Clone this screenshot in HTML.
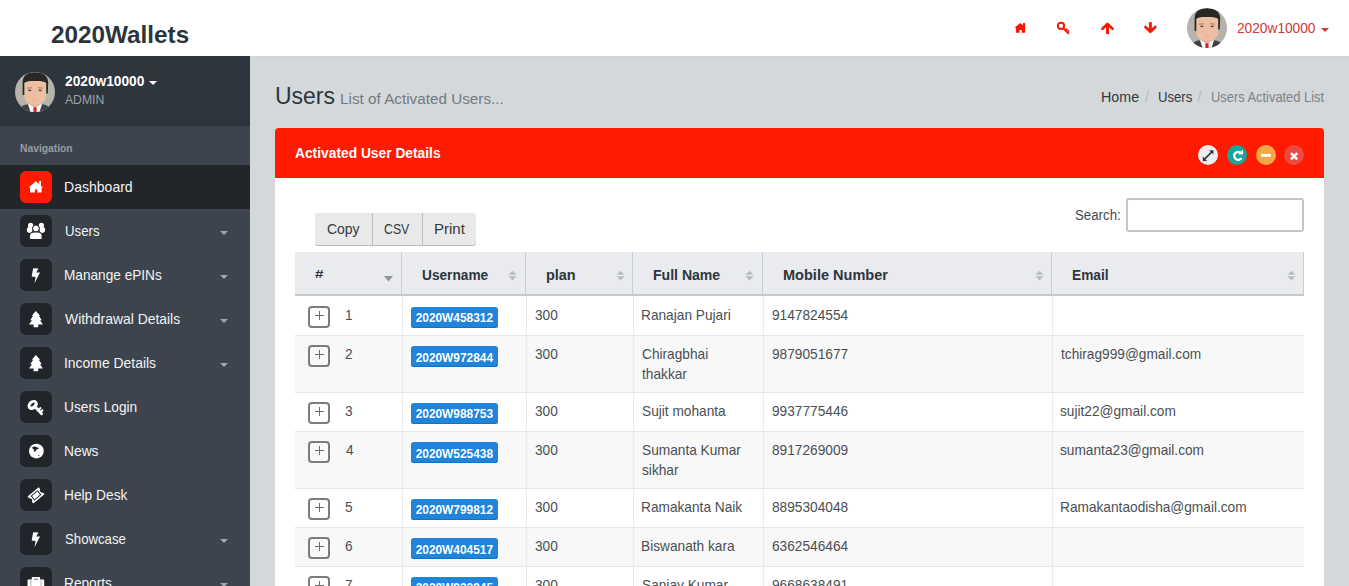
<!DOCTYPE html><html><head><meta charset="utf-8"><style>
html,body{margin:0;padding:0;width:1349px;height:586px;overflow:hidden;background:#d4d8db;font-family:"Liberation Sans", sans-serif;}
.t{position:absolute;white-space:nowrap;}
.b{position:absolute;}
</style></head><body>
<div class="b" style="left:0px;top:0px;width:1349px;height:56px;background:#fff;"></div>
<div class="b" style="left:250px;top:56px;width:1099px;height:1px;background:#cfd3d6;"></div>
<div class="t" style="left:51.15px;top:23.00px;font-size:24px;line-height:24px;color:#2d353c;font-weight:bold;transform:scaleX(1.0123);transform-origin:0 0;">2020Wallets</div>
<svg class="b" style="left:1000px;top:0px" width="170" height="56" viewBox="1000 0 170 56">
<path d="M1014.4 27.8 L1020.2 22.9 L1023 25.3 L1023 23 L1025 23 L1025 27 L1026.4 27.8 L1025.1 27.8 L1025.1 32.8 L1021.7 32.8 L1021.7 30 L1019.6 30 L1019.6 32.8 L1016 32.8 L1016 27.8Z" fill="#f41a08"/>
<g fill="none" stroke="#f41a08"><circle cx="1061" cy="25.9" r="3.1" stroke-width="1.9"/><path d="M1063.2 28.1 L1068.9 33.8" stroke-width="2"/><path d="M1065.6 30.5 L1067.5 28.6 M1067.3 32.2 L1069.2 30.3" stroke-width="1.6"/></g>
<path d="M1107.5 25.5 L1107.5 34" stroke="#f41a08" stroke-width="2.9" fill="none"/><path d="M1102.5 28.8 L1107.5 23.9 L1112.5 28.8" stroke="#f41a08" stroke-width="2.7" fill="none" stroke-linecap="round" stroke-linejoin="round"/>
<path d="M1150.4 22.2 L1150.4 30.5" stroke="#f41a08" stroke-width="2.9" fill="none"/><path d="M1145.5 27 L1150.4 31.8 L1155.3 27" stroke="#f41a08" stroke-width="2.7" fill="none" stroke-linecap="round" stroke-linejoin="round"/>
</svg>
<div class="b" style="left:1187px;top:8px;width:40px;height:40px;"><svg width="40" height="40" viewBox="0 0 40 40"><defs><clipPath id="ch"><circle cx="20" cy="20" r="20"/></clipPath></defs>
<g clip-path="url(#ch)">
<rect width="40" height="40" fill="#b6b2ac"/>
<path d="M12.5 32.3 L27.5 32.3 L28.5 40 L11.5 40Z" fill="#f6f6f6"/>
<path d="M2 40 L5.5 35.5 C8 33.3 11 32.3 13 32.3 L15.5 40Z M38 40 L34.5 35.5 C32 33.3 29 32.3 27 32.3 L24.5 40Z" fill="#3b4145"/>
<path d="M14.5 26 L25.5 26 L25.5 32.5 L20 36 L14.5 32.5Z" fill="#e5b296"/>
<rect x="18.4" y="35.3" width="3.2" height="4.7" fill="#cc2533"/>
<path d="M9.3 9 L31.2 9 L31.2 24 C31.2 30 26 33 20 33 C14 33 9.3 30 9.3 24Z" fill="#ecbea2"/>
<path d="M7.6 23 L7.6 10 C8 3 13 0.3 20 0.3 C27 0.3 32.8 3 33.2 10 L32.8 21.5 L31.2 21.5 L31.2 11 C29 9.2 25 8.8 20 9 C15 8.8 11 9.2 9.3 11 L9.3 23Z" fill="#2a2827"/>
<path d="M12 15.8 L17 15.3 L17 16.3 L12 16.6Z M23 15.3 L28 15.8 L28 16.6 L23 16.3Z" fill="#a57257"/>
<ellipse cx="14.8" cy="18.3" rx="1.7" ry="0.9" fill="#6b4434"/>
<ellipse cx="25.2" cy="18.3" rx="1.7" ry="0.9" fill="#6b4434"/>
<ellipse cx="20" cy="28" rx="3" ry="1.5" fill="#eab09a" opacity="0.6"/>
</g></svg></div>
<div class="t" style="left:1236.71px;top:22.00px;font-size:13.8px;line-height:13.8px;color:#d03838;transform:scaleX(0.9932);transform-origin:0 0;">2020w10000</div>
<div class="b" style="left:1321px;top:28px;width:0;height:0;border-left:4.0px solid transparent;border-right:4.0px solid transparent;border-top:4.0px solid #d03838;"></div>
<div class="b" style="left:0px;top:56px;width:250px;height:530px;background:#3e444d;"></div>
<div class="b" style="left:0px;top:56px;width:250px;height:70px;background:#2f353d;"></div>
<div class="b" style="left:0px;top:122px;width:250px;height:1px;background:#2b3138;"></div>
<div class="b" style="left:0px;top:125px;width:250px;height:1px;background:#2b3138;"></div>
<div class="b" style="left:15px;top:71.5px;width:40px;height:40px;"><svg width="40" height="40" viewBox="0 0 40 40"><defs><clipPath id="cs"><circle cx="20" cy="20" r="20"/></clipPath></defs>
<g clip-path="url(#cs)">
<rect width="40" height="40" fill="#b6b2ac"/>
<path d="M12.5 32.3 L27.5 32.3 L28.5 40 L11.5 40Z" fill="#f6f6f6"/>
<path d="M2 40 L5.5 35.5 C8 33.3 11 32.3 13 32.3 L15.5 40Z M38 40 L34.5 35.5 C32 33.3 29 32.3 27 32.3 L24.5 40Z" fill="#3b4145"/>
<path d="M14.5 26 L25.5 26 L25.5 32.5 L20 36 L14.5 32.5Z" fill="#e5b296"/>
<rect x="18.4" y="35.3" width="3.2" height="4.7" fill="#cc2533"/>
<path d="M9.3 9 L31.2 9 L31.2 24 C31.2 30 26 33 20 33 C14 33 9.3 30 9.3 24Z" fill="#ecbea2"/>
<path d="M7.6 23 L7.6 10 C8 3 13 0.3 20 0.3 C27 0.3 32.8 3 33.2 10 L32.8 21.5 L31.2 21.5 L31.2 11 C29 9.2 25 8.8 20 9 C15 8.8 11 9.2 9.3 11 L9.3 23Z" fill="#2a2827"/>
<path d="M12 15.8 L17 15.3 L17 16.3 L12 16.6Z M23 15.3 L28 15.8 L28 16.6 L23 16.3Z" fill="#a57257"/>
<ellipse cx="14.8" cy="18.3" rx="1.7" ry="0.9" fill="#6b4434"/>
<ellipse cx="25.2" cy="18.3" rx="1.7" ry="0.9" fill="#6b4434"/>
<ellipse cx="20" cy="28" rx="3" ry="1.5" fill="#eab09a" opacity="0.6"/>
</g></svg></div>
<div class="t" style="left:64.62px;top:75.00px;font-size:13.8px;line-height:13.8px;color:#fff;font-weight:bold;transform:scaleX(0.9946);transform-origin:0 0;">2020w10000</div>
<div class="b" style="left:149px;top:81px;width:0;height:0;border-left:4.5px solid transparent;border-right:4.5px solid transparent;border-top:4.5px solid #fff;"></div>
<div class="t" style="left:65.00px;top:94.00px;font-size:12.5px;line-height:12.5px;color:#9ea3a9;transform:scaleX(0.9732);transform-origin:0 0;">ADMIN</div>
<div class="t" style="left:19.73px;top:144.00px;font-size:10px;line-height:10px;color:#989da3;font-weight:bold;transform:scaleX(1.0291);transform-origin:0 0;">Navigation</div>
<div class="b" style="left:0px;top:165px;width:250px;height:44px;background:#22262b;"></div>
<div class="b" style="left:20px;top:171px;width:32px;height:32px;background:#ff1b00;border-radius:6px;"></div>
<svg class="b" style="left:20px;top:171px" width="32" height="32" viewBox="0 0 32 32" fill="#fff"><path d="M8.7 16.6 L15.8 10.2 L18.8 12.9 L18.8 10.1 L21 10.1 L21 14.9 L23.2 16.6 L21.6 16.6 L21.6 21.6 L17.3 21.6 L17.3 18.6 L14.9 18.6 L14.9 21.6 L10.1 21.6 L10.1 16.6Z"/></svg>
<div class="t" style="left:64.38px;top:180.00px;font-size:14.5px;line-height:14.5px;color:#f2f3f4;transform:scaleX(0.9680);transform-origin:0 0;">Dashboard</div>
<div class="b" style="left:20px;top:215px;width:32px;height:32px;background:#212429;border-radius:6px;"></div>
<svg class="b" style="left:20px;top:215px" width="32" height="32" viewBox="0 0 32 32" fill="#fff"><circle cx="10.6" cy="10.4" r="2.6"/><circle cx="21.4" cy="10.4" r="2.6"/><circle cx="9.6" cy="14.9" r="2.8"/><circle cx="22.3" cy="14.9" r="2.8"/><path d="M9.6 24.5 L9.6 21 C9.6 18 12 17 15.9 17 C19.8 17 22.1 18 22.1 21 L22.1 24.5Z" stroke="#212429" stroke-width="1"/><circle cx="15.9" cy="13.4" r="3.4" stroke="#212429" stroke-width="1"/></svg>
<div class="t" style="left:64.51px;top:224.00px;font-size:14.5px;line-height:14.5px;color:#f2f3f4;transform:scaleX(0.9131);transform-origin:0 0;">Users</div>
<div class="b" style="left:220px;top:231px;width:0;height:0;border-left:4.25px solid transparent;border-right:4.25px solid transparent;border-top:4.25px solid #a3a8ae;"></div>
<div class="b" style="left:20px;top:259px;width:32px;height:32px;background:#212429;border-radius:6px;"></div>
<svg class="b" style="left:20px;top:259px" width="32" height="32" viewBox="0 0 32 32" fill="#fff"><path d="M13.1 9.2 L18.4 9.6 L16.3 13.6 L20 13.4 L14.5 24.3 L15.6 18 L11.7 17.6Z"/></svg>
<div class="t" style="left:64.41px;top:268.00px;font-size:14.5px;line-height:14.5px;color:#f2f3f4;transform:scaleX(0.9404);transform-origin:0 0;">Manange ePINs</div>
<div class="b" style="left:220px;top:275px;width:0;height:0;border-left:4.25px solid transparent;border-right:4.25px solid transparent;border-top:4.25px solid #a3a8ae;"></div>
<div class="b" style="left:20px;top:303px;width:32px;height:32px;background:#212429;border-radius:6px;"></div>
<svg class="b" style="left:20px;top:303px" width="32" height="32" viewBox="0 0 32 32" fill="#fff"><path d="M15.8 7.9 L20.2 12.8 L18.8 12.8 L21.8 17.3 L20 17.3 L22.9 21.6 L18.2 21.6 L18.2 24.3 L13.6 24.3 L13.6 21.6 L9 21.6 L12 17.3 L10.2 17.3 L13.2 12.8 L11.8 12.8Z"/></svg>
<div class="t" style="left:65.43px;top:312.00px;font-size:14.5px;line-height:14.5px;color:#f2f3f4;transform:scaleX(0.9592);transform-origin:0 0;">Withdrawal Details</div>
<div class="b" style="left:220px;top:319px;width:0;height:0;border-left:4.25px solid transparent;border-right:4.25px solid transparent;border-top:4.25px solid #a3a8ae;"></div>
<div class="b" style="left:20px;top:347px;width:32px;height:32px;background:#212429;border-radius:6px;"></div>
<svg class="b" style="left:20px;top:347px" width="32" height="32" viewBox="0 0 32 32" fill="#fff"><path d="M15.8 7.9 L20.2 12.8 L18.8 12.8 L21.8 17.3 L20 17.3 L22.9 21.6 L18.2 21.6 L18.2 24.3 L13.6 24.3 L13.6 21.6 L9 21.6 L12 17.3 L10.2 17.3 L13.2 12.8 L11.8 12.8Z"/></svg>
<div class="t" style="left:64.25px;top:356.00px;font-size:14.5px;line-height:14.5px;color:#f2f3f4;transform:scaleX(0.9596);transform-origin:0 0;">Income Details</div>
<div class="b" style="left:220px;top:363px;width:0;height:0;border-left:4.25px solid transparent;border-right:4.25px solid transparent;border-top:4.25px solid #a3a8ae;"></div>
<div class="b" style="left:20px;top:391px;width:32px;height:32px;background:#212429;border-radius:6px;"></div>
<svg class="b" style="left:20px;top:391px" width="32" height="32" viewBox="0 0 32 32" fill="#fff"><ellipse cx="12.7" cy="13.9" rx="5.6" ry="4.5" transform="rotate(-42 12.7 13.9)"/><path d="M15.5 16.2 L21.6 22.8" stroke="#fff" stroke-width="2.8" stroke-linecap="round"/><path d="M18.6 18.8 L21 16.6 M20.6 21 L23 18.8" stroke="#fff" stroke-width="2"/><ellipse cx="12.6" cy="13.6" rx="2.6" ry="1.1" fill="#212429" transform="rotate(-42 12.6 13.6)"/></svg>
<div class="t" style="left:64.47px;top:400.00px;font-size:14.5px;line-height:14.5px;color:#f2f3f4;transform:scaleX(0.9465);transform-origin:0 0;">Users Login</div>
<div class="b" style="left:20px;top:435px;width:32px;height:32px;background:#212429;border-radius:6px;"></div>
<svg class="b" style="left:20px;top:435px" width="32" height="32" viewBox="0 0 32 32" fill="#fff"><circle cx="16.4" cy="16.1" r="7.4"/><path d="M12.3 12.2 C13.5 11.2 15.5 11.3 16.8 12.2 C17.6 12.8 18.6 12.6 19.4 13 C18.5 14 17.2 14 16.5 14.8 C15.8 15.6 15.5 16.5 14.6 16.9 C13.8 16 14.2 14.6 13.2 14 C12.6 13.6 12.2 13 12.3 12.2Z M18 20.5 C18.5 19.9 19.3 19.9 19.6 20.4 C19.2 21 18.5 21 18 20.5Z" fill="#212429"/></svg>
<div class="t" style="left:64.40px;top:444.00px;font-size:14.5px;line-height:14.5px;color:#f2f3f4;transform:scaleX(0.9513);transform-origin:0 0;">News</div>
<div class="b" style="left:20px;top:479px;width:32px;height:32px;background:#212429;border-radius:6px;"></div>
<svg class="b" style="left:20px;top:479px" width="32" height="32" viewBox="0 0 32 32" fill="#fff"><g transform="rotate(-40 16 16.4)"><path d="M8.8 11.9 L23.2 11.9 L23.2 14.2 C22.3 14.4 21.7 15.3 21.7 16.4 C21.7 17.5 22.3 18.4 23.2 18.6 L23.2 20.9 L8.8 20.9 L8.8 18.6 C9.7 18.4 10.3 17.5 10.3 16.4 C10.3 15.3 9.7 14.4 8.8 14.2Z"/><rect x="12" y="13.9" width="8" height="5" fill="none" stroke="#212429" stroke-width="1"/></g></svg>
<div class="t" style="left:64.40px;top:488.00px;font-size:14.5px;line-height:14.5px;color:#f2f3f4;transform:scaleX(0.9474);transform-origin:0 0;">Help Desk</div>
<div class="b" style="left:20px;top:523px;width:32px;height:32px;background:#212429;border-radius:6px;"></div>
<svg class="b" style="left:20px;top:523px" width="32" height="32" viewBox="0 0 32 32" fill="#fff"><path d="M13.1 9.2 L18.4 9.6 L16.3 13.6 L20 13.4 L14.5 24.3 L15.6 18 L11.7 17.6Z"/></svg>
<div class="t" style="left:64.91px;top:532.00px;font-size:14.5px;line-height:14.5px;color:#f2f3f4;transform:scaleX(0.9099);transform-origin:0 0;">Showcase</div>
<div class="b" style="left:220px;top:539px;width:0;height:0;border-left:4.25px solid transparent;border-right:4.25px solid transparent;border-top:4.25px solid #a3a8ae;"></div>
<div class="b" style="left:20px;top:567px;width:32px;height:32px;background:#212429;border-radius:6px;"></div>
<svg class="b" style="left:20px;top:567px" width="32" height="32" viewBox="0 0 32 32" fill="#fff"><path d="M11.8 12.6 L11.8 10.6 C11.8 10 12.2 9.9 12.8 9.9 L19.1 9.9 C19.7 9.9 20.1 10 20.1 10.6 L20.1 12.6 L23.2 12.6 C23.8 12.6 24.2 13 24.2 13.6 L24.2 26 L7.5 26 L7.5 13.6 C7.5 13 7.9 12.6 8.5 12.6Z M14 11.8 L14 12.6 L17.9 12.6 L17.9 11.8Z" fill-rule="evenodd"/><path d="M10.9 12.6 L10.9 26 M21.1 12.6 L21.1 26" stroke="#bfc1c3" stroke-width="1.2"/></svg>
<div class="t" style="left:64.41px;top:576.00px;font-size:14.5px;line-height:14.5px;color:#f2f3f4;transform:scaleX(0.9433);transform-origin:0 0;">Reports</div>
<div class="b" style="left:220px;top:583px;width:0;height:0;border-left:4.25px solid transparent;border-right:4.25px solid transparent;border-top:4.25px solid #a3a8ae;"></div>
<div class="t" style="left:274.78px;top:84.00px;font-size:24px;line-height:24px;color:#2d353c;transform:scaleX(0.9567);transform-origin:0 0;">Users</div>
<div class="t" style="left:340.08px;top:91.00px;font-size:15.2px;line-height:15.2px;color:#737a80;transform:scaleX(1.0054);transform-origin:0 0;">List of Activated Users...</div>
<div class="t" style="left:1101.16px;top:90.00px;font-size:14px;line-height:14px;color:#34393f;transform:scaleX(1.0208);transform-origin:0 0;">Home</div>
<div class="t" style="left:1145.00px;top:90.00px;font-size:14px;line-height:14px;color:#b3b8bd;">/</div>
<div class="t" style="left:1158.22px;top:90.00px;font-size:14px;line-height:14px;color:#34393f;transform:scaleX(0.9371);transform-origin:0 0;">Users</div>
<div class="t" style="left:1197.50px;top:90.00px;font-size:14px;line-height:14px;color:#b3b8bd;">/</div>
<div class="t" style="left:1211.03px;top:90.00px;font-size:14px;line-height:14px;color:#7c8288;transform:scaleX(0.9195);transform-origin:0 0;">Users Activated List</div>
<div class="b" style="left:275px;top:128px;width:1049px;height:458px;background:#fff;border-radius:4px 4px 0 0;"></div>
<div class="b" style="left:275px;top:128px;width:1049px;height:50px;background:#ff1a00;border-radius:4px 4px 0 0;"></div>
<div class="t" style="left:294.66px;top:146.00px;font-size:14px;line-height:14px;color:#fff;font-weight:bold;transform:scaleX(0.9848);transform-origin:0 0;">Activated User Details</div>
<div class="b" style="left:1198px;top:145px;width:20px;height:20px;border-radius:50%;background:#eceef0;"></div>
<div class="b" style="left:1227.1px;top:145px;width:20px;height:20px;border-radius:50%;background:#18a59b;"></div>
<div class="b" style="left:1255.8px;top:145px;width:20px;height:20px;border-radius:50%;background:#f3a845;"></div>
<div class="b" style="left:1284.4px;top:145px;width:20px;height:20px;border-radius:50%;background:#ea4a42;"></div>
<svg class="b" style="left:1190px;top:140px" width="120" height="30" viewBox="1190 140 120 30">
<path d="M1204.6 159.1 L1211.6 152.1" stroke="#2d353c" stroke-width="1.5"/><path d="M1213.4 150.3 L1213.4 154.6 L1209.1 150.3Z M1202.8 160.9 L1202.8 156.6 L1207.1 160.9Z" fill="#2d353c"/>
<path d="M1241.2 153.2 A4 4 0 1 0 1241.6 158" fill="none" stroke="#fff" stroke-width="2.3"/><path d="M1238.2 154.4 L1243 154.4 L1243 149.6Z" fill="#fff"/>
<rect x="1261" y="153.9" width="9.8" height="2.9" fill="#fff"/>
<path d="M1291 153.1 L1297.2 159.3 M1297.2 153.1 L1291 159.3" stroke="#fff" stroke-width="2.6"/>
</svg>
<div class="b" style="left:315px;top:213px;width:161px;height:32px;background:#e9e9e9;border-radius:3px;box-shadow:0 1px 0 #b9bcbf;"></div>
<div class="b" style="left:372px;top:213px;width:1px;height:32px;background:#bcbfc2;"></div>
<div class="b" style="left:422px;top:213px;width:1px;height:32px;background:#bcbfc2;"></div>
<div class="t" style="left:326.90px;top:222.00px;font-size:14.5px;line-height:14.5px;color:#33383d;transform:scaleX(0.9628);transform-origin:0 0;">Copy</div>
<div class="t" style="left:384.28px;top:222.00px;font-size:14.5px;line-height:14.5px;color:#33383d;transform:scaleX(0.8483);transform-origin:0 0;">CSV</div>
<div class="t" style="left:434.30px;top:222.00px;font-size:14.5px;line-height:14.5px;color:#33383d;transform:scaleX(1.0362);transform-origin:0 0;">Print</div>
<div class="t" style="left:1074.70px;top:208.00px;font-size:14px;line-height:14px;color:#44494e;transform:scaleX(0.9473);transform-origin:0 0;">Search:</div>
<div class="b" style="left:1126px;top:198px;width:174px;height:30px;border:2px solid #c4c5c6;border-radius:3px;background:#fff;"></div>
<div class="b" style="left:295px;top:252px;width:1009px;height:42px;background:#e9ebee;"></div>
<div class="b" style="left:295px;top:294px;width:1009px;height:2px;background:#c6c9cc;"></div>
<div class="b" style="left:401px;top:252px;width:1px;height:42px;background:#c9ccd0;"></div>
<div class="b" style="left:525px;top:252px;width:1px;height:42px;background:#c9ccd0;"></div>
<div class="b" style="left:632px;top:252px;width:1px;height:42px;background:#c9ccd0;"></div>
<div class="b" style="left:762px;top:252px;width:1px;height:42px;background:#c9ccd0;"></div>
<div class="b" style="left:1051px;top:252px;width:1px;height:42px;background:#c9ccd0;"></div>
<div class="b" style="left:1303px;top:252px;width:1px;height:42px;background:#c9ccd0;"></div>
<div class="t" style="left:314.77px;top:269.00px;font-size:11.5px;line-height:11.5px;color:#2d353c;font-weight:bold;transform:scaleX(1.3251);transform-origin:0 0;">#</div>
<div class="t" style="left:421.68px;top:268.00px;font-size:14px;line-height:14px;color:#2d353c;font-weight:bold;transform:scaleX(0.9780);transform-origin:0 0;">Username</div>
<div class="t" style="left:545.66px;top:268.00px;font-size:14px;line-height:14px;color:#2d353c;font-weight:bold;transform:scaleX(1.0289);transform-origin:0 0;">plan</div>
<div class="t" style="left:652.59px;top:268.00px;font-size:14px;line-height:14px;color:#2d353c;font-weight:bold;transform:scaleX(1.0043);transform-origin:0 0;">Full Name</div>
<div class="t" style="left:782.66px;top:268.00px;font-size:14px;line-height:14px;color:#2d353c;font-weight:bold;transform:scaleX(1.0377);transform-origin:0 0;">Mobile Number</div>
<div class="t" style="left:1071.91px;top:268.00px;font-size:14px;line-height:14px;color:#2d353c;font-weight:bold;transform:scaleX(0.9777);transform-origin:0 0;">Email</div>
<svg class="b" style="left:384px;top:276px" width="9" height="6" viewBox="0 0 9 6"><path d="M0 0 L9 0 L4.5 5.5Z" fill="#8f9499"/></svg>
<svg class="b" style="left:508px;top:270px" width="9" height="11" viewBox="0 0 9 11"><path d="M4.5 0.7 L8.5 4.7 L0.5 4.7Z M4.5 10.5 L8.5 6.3 L0.5 6.3Z" fill="#b8bbbe"/></svg>
<svg class="b" style="left:616px;top:270px" width="9" height="11" viewBox="0 0 9 11"><path d="M4.5 0.7 L8.5 4.7 L0.5 4.7Z M4.5 10.5 L8.5 6.3 L0.5 6.3Z" fill="#b8bbbe"/></svg>
<svg class="b" style="left:745px;top:270px" width="9" height="11" viewBox="0 0 9 11"><path d="M4.5 0.7 L8.5 4.7 L0.5 4.7Z M4.5 10.5 L8.5 6.3 L0.5 6.3Z" fill="#b8bbbe"/></svg>
<svg class="b" style="left:1035px;top:270px" width="9" height="11" viewBox="0 0 9 11"><path d="M4.5 0.7 L8.5 4.7 L0.5 4.7Z M4.5 10.5 L8.5 6.3 L0.5 6.3Z" fill="#b8bbbe"/></svg>
<svg class="b" style="left:1287px;top:270px" width="9" height="11" viewBox="0 0 9 11"><path d="M4.5 0.7 L8.5 4.7 L0.5 4.7Z M4.5 10.5 L8.5 6.3 L0.5 6.3Z" fill="#b8bbbe"/></svg>
<div class="b" style="left:402px;top:296px;width:1px;height:39px;background:#e8eaec;"></div>
<div class="b" style="left:526px;top:296px;width:1px;height:39px;background:#e8eaec;"></div>
<div class="b" style="left:633px;top:296px;width:1px;height:39px;background:#e8eaec;"></div>
<div class="b" style="left:763px;top:296px;width:1px;height:39px;background:#e8eaec;"></div>
<div class="b" style="left:1052px;top:296px;width:1px;height:39px;background:#e8eaec;"></div>
<div class="b" style="left:308px;top:306px;width:18px;height:18px;border:2px solid #7c7c7c;border-radius:4px;"></div>
<div class="b" style="left:315px;top:315px;width:9px;height:1px;background:#6e6e6e;"></div>
<div class="b" style="left:319px;top:311px;width:1px;height:9px;background:#6e6e6e;"></div>
<div class="t" style="left:344.97px;top:308.00px;font-size:14.4px;line-height:14.4px;color:#4a4f54;transform:scaleX(0.9514);transform-origin:0 0;">1</div>
<div class="b" style="left:411px;top:307px;width:87px;height:21px;background:#1e84dc;border-radius:3px;box-shadow:inset 0 -1px 0 #1870c0;"></div>
<div class="t" style="left:415.68px;top:313.00px;font-size:11.9px;line-height:11.9px;color:#fff;font-weight:bold;">2020W458312</div>
<div class="t" style="left:534.95px;top:308.00px;font-size:14.4px;line-height:14.4px;color:#4a4f54;transform:scaleX(0.9514);transform-origin:0 0;">300</div>
<div class="t" style="left:641.10px;top:308.00px;font-size:14.4px;line-height:14.4px;color:#4a4f54;transform:scaleX(0.9514);transform-origin:0 0;">Ranajan Pujari</div>
<div class="t" style="left:771.58px;top:308.00px;font-size:14.4px;line-height:14.4px;color:#4a4f54;transform:scaleX(0.9514);transform-origin:0 0;">9147824554</div>
<div class="b" style="left:295px;top:335px;width:1009px;height:1px;background:#e4e6e8;"></div>
<div class="b" style="left:295px;top:336px;width:1009px;height:56px;background:#f8f8f8;"></div>
<div class="b" style="left:402px;top:336px;width:1px;height:56px;background:#e8eaec;"></div>
<div class="b" style="left:526px;top:336px;width:1px;height:56px;background:#e8eaec;"></div>
<div class="b" style="left:633px;top:336px;width:1px;height:56px;background:#e8eaec;"></div>
<div class="b" style="left:763px;top:336px;width:1px;height:56px;background:#e8eaec;"></div>
<div class="b" style="left:1052px;top:336px;width:1px;height:56px;background:#e8eaec;"></div>
<div class="b" style="left:308px;top:345px;width:18px;height:18px;border:2px solid #7c7c7c;border-radius:4px;"></div>
<div class="b" style="left:315px;top:354px;width:9px;height:1px;background:#6e6e6e;"></div>
<div class="b" style="left:319px;top:350px;width:1px;height:9px;background:#6e6e6e;"></div>
<div class="t" style="left:345.31px;top:347.00px;font-size:14.4px;line-height:14.4px;color:#4a4f54;transform:scaleX(0.9514);transform-origin:0 0;">2</div>
<div class="b" style="left:411px;top:346px;width:87px;height:21px;background:#1e84dc;border-radius:3px;box-shadow:inset 0 -1px 0 #1870c0;"></div>
<div class="t" style="left:415.68px;top:353.00px;font-size:11.9px;line-height:11.9px;color:#fff;font-weight:bold;">2020W972844</div>
<div class="t" style="left:534.95px;top:347.00px;font-size:14.4px;line-height:14.4px;color:#4a4f54;transform:scaleX(0.9514);transform-origin:0 0;">300</div>
<div class="t" style="left:641.52px;top:347.00px;font-size:14.4px;line-height:14.4px;color:#4a4f54;transform:scaleX(0.9514);transform-origin:0 0;">Chiragbhai</div>
<div class="t" style="left:641.99px;top:367.00px;font-size:14.4px;line-height:14.4px;color:#4a4f54;transform:scaleX(0.9514);transform-origin:0 0;">thakkar</div>
<div class="t" style="left:771.58px;top:347.00px;font-size:14.4px;line-height:14.4px;color:#4a4f54;transform:scaleX(0.9514);transform-origin:0 0;">9879051677</div>
<div class="t" style="left:1060.69px;top:347.00px;font-size:14.4px;line-height:14.4px;color:#4a4f54;transform:scaleX(0.9514);transform-origin:0 0;">tchirag999@gmail.com</div>
<div class="b" style="left:295px;top:392px;width:1009px;height:1px;background:#e4e6e8;"></div>
<div class="b" style="left:402px;top:393px;width:1px;height:38px;background:#e8eaec;"></div>
<div class="b" style="left:526px;top:393px;width:1px;height:38px;background:#e8eaec;"></div>
<div class="b" style="left:633px;top:393px;width:1px;height:38px;background:#e8eaec;"></div>
<div class="b" style="left:763px;top:393px;width:1px;height:38px;background:#e8eaec;"></div>
<div class="b" style="left:1052px;top:393px;width:1px;height:38px;background:#e8eaec;"></div>
<div class="b" style="left:308px;top:402px;width:18px;height:18px;border:2px solid #7c7c7c;border-radius:4px;"></div>
<div class="b" style="left:315px;top:411px;width:9px;height:1px;background:#6e6e6e;"></div>
<div class="b" style="left:319px;top:407px;width:1px;height:9px;background:#6e6e6e;"></div>
<div class="t" style="left:345.45px;top:404.00px;font-size:14.4px;line-height:14.4px;color:#4a4f54;transform:scaleX(0.9514);transform-origin:0 0;">3</div>
<div class="b" style="left:411px;top:403px;width:87px;height:21px;background:#1e84dc;border-radius:3px;box-shadow:inset 0 -1px 0 #1870c0;"></div>
<div class="t" style="left:415.68px;top:409.00px;font-size:11.9px;line-height:11.9px;color:#fff;font-weight:bold;">2020W988753</div>
<div class="t" style="left:534.95px;top:404.00px;font-size:14.4px;line-height:14.4px;color:#4a4f54;transform:scaleX(0.9514);transform-origin:0 0;">300</div>
<div class="t" style="left:641.58px;top:404.00px;font-size:14.4px;line-height:14.4px;color:#4a4f54;transform:scaleX(0.9514);transform-origin:0 0;">Sujit mohanta</div>
<div class="t" style="left:771.58px;top:404.00px;font-size:14.4px;line-height:14.4px;color:#4a4f54;transform:scaleX(0.9514);transform-origin:0 0;">9937775446</div>
<div class="t" style="left:1060.49px;top:404.00px;font-size:14.4px;line-height:14.4px;color:#4a4f54;transform:scaleX(0.9514);transform-origin:0 0;">sujit22@gmail.com</div>
<div class="b" style="left:295px;top:431px;width:1009px;height:1px;background:#e4e6e8;"></div>
<div class="b" style="left:295px;top:432px;width:1009px;height:56px;background:#f8f8f8;"></div>
<div class="b" style="left:402px;top:432px;width:1px;height:56px;background:#e8eaec;"></div>
<div class="b" style="left:526px;top:432px;width:1px;height:56px;background:#e8eaec;"></div>
<div class="b" style="left:633px;top:432px;width:1px;height:56px;background:#e8eaec;"></div>
<div class="b" style="left:763px;top:432px;width:1px;height:56px;background:#e8eaec;"></div>
<div class="b" style="left:1052px;top:432px;width:1px;height:56px;background:#e8eaec;"></div>
<div class="b" style="left:308px;top:441px;width:18px;height:18px;border:2px solid #7c7c7c;border-radius:4px;"></div>
<div class="b" style="left:315px;top:450px;width:9px;height:1px;background:#6e6e6e;"></div>
<div class="b" style="left:319px;top:446px;width:1px;height:9px;background:#6e6e6e;"></div>
<div class="t" style="left:345.73px;top:443.00px;font-size:14.4px;line-height:14.4px;color:#4a4f54;transform:scaleX(0.9514);transform-origin:0 0;">4</div>
<div class="b" style="left:411px;top:442px;width:87px;height:21px;background:#1e84dc;border-radius:3px;box-shadow:inset 0 -1px 0 #1870c0;"></div>
<div class="t" style="left:415.68px;top:449.00px;font-size:11.9px;line-height:11.9px;color:#fff;font-weight:bold;">2020W525438</div>
<div class="t" style="left:534.95px;top:443.00px;font-size:14.4px;line-height:14.4px;color:#4a4f54;transform:scaleX(0.9514);transform-origin:0 0;">300</div>
<div class="t" style="left:641.58px;top:443.00px;font-size:14.4px;line-height:14.4px;color:#4a4f54;transform:scaleX(0.9514);transform-origin:0 0;">Sumanta Kumar</div>
<div class="t" style="left:641.79px;top:463.00px;font-size:14.4px;line-height:14.4px;color:#4a4f54;transform:scaleX(0.9514);transform-origin:0 0;">sikhar</div>
<div class="t" style="left:771.58px;top:443.00px;font-size:14.4px;line-height:14.4px;color:#4a4f54;transform:scaleX(0.9514);transform-origin:0 0;">8917269009</div>
<div class="t" style="left:1060.49px;top:443.00px;font-size:14.4px;line-height:14.4px;color:#4a4f54;transform:scaleX(0.9514);transform-origin:0 0;">sumanta23@gmail.com</div>
<div class="b" style="left:295px;top:488px;width:1009px;height:1px;background:#e4e6e8;"></div>
<div class="b" style="left:402px;top:489px;width:1px;height:38px;background:#e8eaec;"></div>
<div class="b" style="left:526px;top:489px;width:1px;height:38px;background:#e8eaec;"></div>
<div class="b" style="left:633px;top:489px;width:1px;height:38px;background:#e8eaec;"></div>
<div class="b" style="left:763px;top:489px;width:1px;height:38px;background:#e8eaec;"></div>
<div class="b" style="left:1052px;top:489px;width:1px;height:38px;background:#e8eaec;"></div>
<div class="b" style="left:308px;top:498px;width:18px;height:18px;border:2px solid #7c7c7c;border-radius:4px;"></div>
<div class="b" style="left:315px;top:507px;width:9px;height:1px;background:#6e6e6e;"></div>
<div class="b" style="left:319px;top:503px;width:1px;height:9px;background:#6e6e6e;"></div>
<div class="t" style="left:345.45px;top:500.00px;font-size:14.4px;line-height:14.4px;color:#4a4f54;transform:scaleX(0.9514);transform-origin:0 0;">5</div>
<div class="b" style="left:411px;top:499px;width:87px;height:21px;background:#1e84dc;border-radius:3px;box-shadow:inset 0 -1px 0 #1870c0;"></div>
<div class="t" style="left:415.68px;top:505.00px;font-size:11.9px;line-height:11.9px;color:#fff;font-weight:bold;">2020W799812</div>
<div class="t" style="left:534.95px;top:500.00px;font-size:14.4px;line-height:14.4px;color:#4a4f54;transform:scaleX(0.9514);transform-origin:0 0;">300</div>
<div class="t" style="left:641.10px;top:500.00px;font-size:14.4px;line-height:14.4px;color:#4a4f54;transform:scaleX(0.9514);transform-origin:0 0;">Ramakanta Naik</div>
<div class="t" style="left:771.58px;top:500.00px;font-size:14.4px;line-height:14.4px;color:#4a4f54;transform:scaleX(0.9514);transform-origin:0 0;">8895304048</div>
<div class="t" style="left:1059.80px;top:500.00px;font-size:14.4px;line-height:14.4px;color:#4a4f54;transform:scaleX(0.9514);transform-origin:0 0;">Ramakantaodisha@gmail.com</div>
<div class="b" style="left:295px;top:527px;width:1009px;height:1px;background:#e4e6e8;"></div>
<div class="b" style="left:295px;top:528px;width:1009px;height:38px;background:#f8f8f8;"></div>
<div class="b" style="left:402px;top:528px;width:1px;height:38px;background:#e8eaec;"></div>
<div class="b" style="left:526px;top:528px;width:1px;height:38px;background:#e8eaec;"></div>
<div class="b" style="left:633px;top:528px;width:1px;height:38px;background:#e8eaec;"></div>
<div class="b" style="left:763px;top:528px;width:1px;height:38px;background:#e8eaec;"></div>
<div class="b" style="left:1052px;top:528px;width:1px;height:38px;background:#e8eaec;"></div>
<div class="b" style="left:308px;top:537px;width:18px;height:18px;border:2px solid #7c7c7c;border-radius:4px;"></div>
<div class="b" style="left:315px;top:546px;width:9px;height:1px;background:#6e6e6e;"></div>
<div class="b" style="left:319px;top:542px;width:1px;height:9px;background:#6e6e6e;"></div>
<div class="t" style="left:345.31px;top:539.00px;font-size:14.4px;line-height:14.4px;color:#4a4f54;transform:scaleX(0.9514);transform-origin:0 0;">6</div>
<div class="b" style="left:411px;top:538px;width:87px;height:21px;background:#1e84dc;border-radius:3px;box-shadow:inset 0 -1px 0 #1870c0;"></div>
<div class="t" style="left:415.68px;top:545.00px;font-size:11.9px;line-height:11.9px;color:#fff;font-weight:bold;">2020W404517</div>
<div class="t" style="left:534.95px;top:539.00px;font-size:14.4px;line-height:14.4px;color:#4a4f54;transform:scaleX(0.9514);transform-origin:0 0;">300</div>
<div class="t" style="left:641.10px;top:539.00px;font-size:14.4px;line-height:14.4px;color:#4a4f54;transform:scaleX(0.9514);transform-origin:0 0;">Biswanath kara</div>
<div class="t" style="left:771.52px;top:539.00px;font-size:14.4px;line-height:14.4px;color:#4a4f54;transform:scaleX(0.9514);transform-origin:0 0;">6362546464</div>
<div class="b" style="left:295px;top:566px;width:1009px;height:1px;background:#e4e6e8;"></div>
<div class="b" style="left:402px;top:567px;width:1px;height:38px;background:#e8eaec;"></div>
<div class="b" style="left:526px;top:567px;width:1px;height:38px;background:#e8eaec;"></div>
<div class="b" style="left:633px;top:567px;width:1px;height:38px;background:#e8eaec;"></div>
<div class="b" style="left:763px;top:567px;width:1px;height:38px;background:#e8eaec;"></div>
<div class="b" style="left:1052px;top:567px;width:1px;height:38px;background:#e8eaec;"></div>
<div class="b" style="left:308px;top:576px;width:18px;height:18px;border:2px solid #7c7c7c;border-radius:4px;"></div>
<div class="b" style="left:315px;top:585px;width:9px;height:1px;background:#6e6e6e;"></div>
<div class="b" style="left:319px;top:581px;width:1px;height:9px;background:#6e6e6e;"></div>
<div class="t" style="left:345.31px;top:578.00px;font-size:14.4px;line-height:14.4px;color:#4a4f54;transform:scaleX(0.9514);transform-origin:0 0;">7</div>
<div class="b" style="left:411px;top:577px;width:87px;height:21px;background:#1e84dc;border-radius:3px;box-shadow:inset 0 -1px 0 #1870c0;"></div>
<div class="t" style="left:415.68px;top:583.00px;font-size:11.9px;line-height:11.9px;color:#fff;font-weight:bold;">2020W933945</div>
<div class="t" style="left:534.95px;top:578.00px;font-size:14.4px;line-height:14.4px;color:#4a4f54;transform:scaleX(0.9514);transform-origin:0 0;">300</div>
<div class="t" style="left:641.58px;top:578.00px;font-size:14.4px;line-height:14.4px;color:#4a4f54;transform:scaleX(0.9514);transform-origin:0 0;">Sanjay Kumar</div>
<div class="t" style="left:771.58px;top:578.00px;font-size:14.4px;line-height:14.4px;color:#4a4f54;transform:scaleX(0.9514);transform-origin:0 0;">9668638491</div>
</body></html>
